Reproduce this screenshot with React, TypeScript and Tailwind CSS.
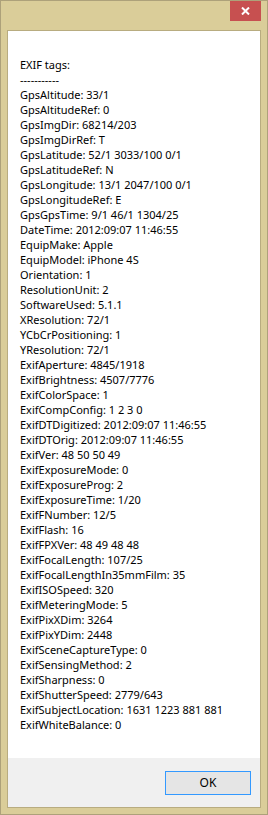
import React from "react";

const lines = [
  "EXIF tags:",
  "-----------",
  "GpsAltitude: 33/1",
  "GpsAltitudeRef: 0",
  "GpsImgDir: 68214/203",
  "GpsImgDirRef: T",
  "GpsLatitude: 52/1 3033/100 0/1",
  "GpsLatitudeRef: N",
  "GpsLongitude: 13/1 2047/100 0/1",
  "GpsLongitudeRef: E",
  "GpsGpsTime: 9/1 46/1 1304/25",
  "DateTime: 2012:09:07 11:46:55",
  "EquipMake: Apple",
  "EquipModel: iPhone 4S",
  "Orientation: 1",
  "ResolutionUnit: 2",
  "SoftwareUsed: 5.1.1",
  "XResolution: 72/1",
  "YCbCrPositioning: 1",
  "YResolution: 72/1",
  "ExifAperture: 4845/1918",
  "ExifBrightness: 4507/7776",
  "ExifColorSpace: 1",
  "ExifCompConfig: 1 2 3 0",
  "ExifDTDigitized: 2012:09:07 11:46:55",
  "ExifDTOrig: 2012:09:07 11:46:55",
  "ExifVer: 48 50 50 49",
  "ExifExposureMode: 0",
  "ExifExposureProg: 2",
  "ExifExposureTime: 1/20",
  "ExifFNumber: 12/5",
  "ExifFlash: 16",
  "ExifFPXVer: 48 49 48 48",
  "ExifFocalLength: 107/25",
  "ExifFocalLengthIn35mmFilm: 35",
  "ExifISOSpeed: 320",
  "ExifMeteringMode: 5",
  "ExifPixXDim: 3264",
  "ExifPixYDim: 2448",
  "ExifSceneCaptureType: 0",
  "ExifSensingMethod: 2",
  "ExifSharpness: 0",
  "ExifShutterSpeed: 2779/643",
  "ExifSubjectLocation: 1631 1223 881 881",
  "ExifWhiteBalance: 0",
];

export default function App() {
  return (
    <div
      className="w-[268px] h-[815px] bg-[#dacd99] border border-[#ada17a] flex flex-col"
      style={{ fontFamily: "'Noto Sans', 'Liberation Sans', sans-serif" }}
    >
      <div className="h-[29px] flex justify-end items-start pr-[6px]">
        <div className="w-[31px] h-[20px] bg-[#c75050] flex items-center justify-center">
          <svg width="9" height="8" viewBox="0 0 9 8">
            <path d="M1 0.5 L8 7.5 M8 0.5 L1 7.5" stroke="#fff" strokeWidth="2" />
          </svg>
        </div>
      </div>
      <div className="mx-[6px] mb-[6px] flex-1 border border-[#b8ac80] flex flex-col">
        <div className="flex-1 bg-white pl-[12px] pt-[26px] text-[11px] leading-[15px] text-black">
          {lines.map((l, i) => (
            <div key={i} className="whitespace-nowrap">
              {l}
            </div>
          ))}
        </div>
        <div className="h-[49px] bg-[#f0f0f0] flex justify-end items-start pt-[13px] pr-[9px]">
          <button className="w-[86px] h-[24px] border border-[#3399ff] bg-[#e5e5e5] text-[12px] text-black flex items-center justify-center">
            OK
          </button>
        </div>
      </div>
    </div>
  );
}
